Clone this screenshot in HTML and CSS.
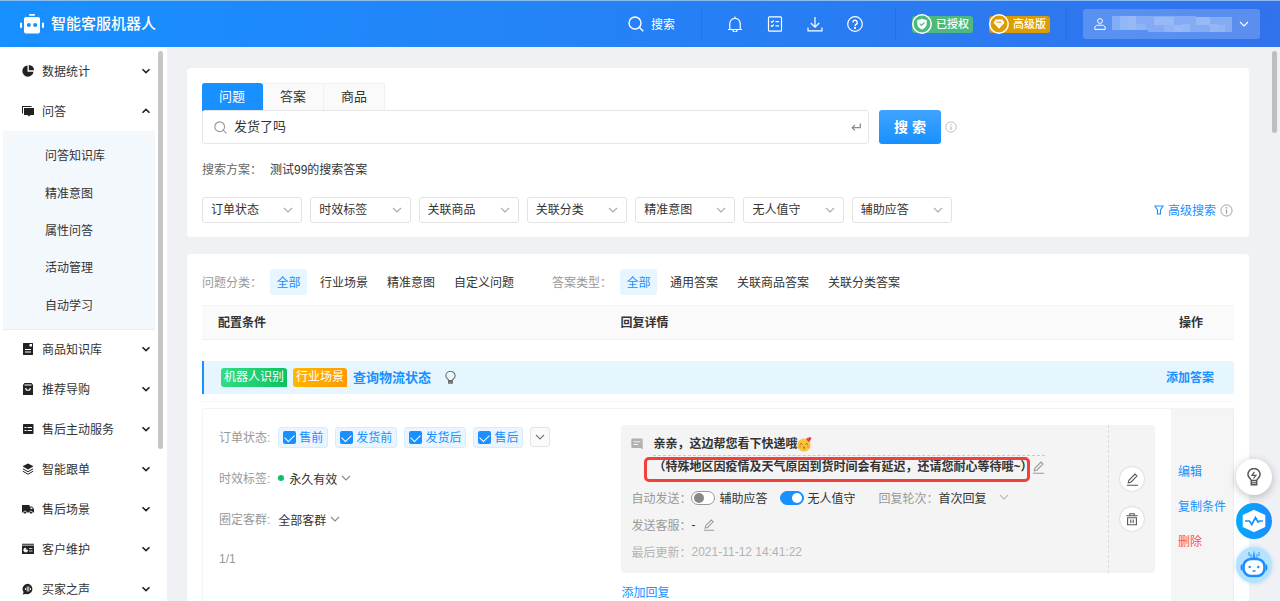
FILE: index.html
```html
<!DOCTYPE html>
<html lang="zh-CN">
<head>
<meta charset="utf-8">
<title>智能客服机器人</title>
<meta name="viewport" content="width=device-width, initial-scale=1">
<link rel="stylesheet" href="styles.css">
</head>
<body>
<svg class="defs" width="0" height="0" aria-hidden="true">
  <symbol id="chev" viewBox="0 0 10 10"><path d="M1 3l4 4 4-4" fill="none" stroke="currentColor" stroke-width="1.1"/></symbol>
  <symbol id="chev-bold" viewBox="0 0 10 10"><path d="M1.500 3.200L5 6.600l3.500-3.400" fill="none" stroke="currentColor" stroke-width="1.600"/></symbol>
  <symbol id="info" viewBox="0 0 14 14"><g fill="none" stroke="currentColor"><circle cx="7" cy="7" r="6"/><path d="M7 6v4.500" stroke-width="1.300"/></g><circle cx="7" cy="4" r=".9" fill="currentColor"/></symbol>
  <symbol id="search" viewBox="0 0 16 16"><g fill="none" stroke="currentColor" stroke-width="1.400"><circle cx="7" cy="7" r="6"/><path d="M11.300 11.300L15.200 15.200"/></g></symbol>
  <symbol id="pencil" viewBox="0 0 14 14"><path d="M2.500 10.500l.6-2.700L9.700 1.200l2.100 2.100-6.600 6.600zM1 13.200h12" fill="none" stroke="currentColor" stroke-width="1.200"/></symbol>
</svg>
<div class="app">
  <header class="topbar">
    <h1 class="brand">
      <svg width="24" height="20" viewBox="0 0 24 20" fill="#fff" aria-hidden="true"><rect x="9" y="0" width="6" height="1.800" rx=".9"/><path d="M6 3h12a2 2 0 0 1 2 2v12.500a2 2 0 0 1-2 2H6a2 2 0 0 1-2-2V5a2 2 0 0 1 2-2z"/><rect x="0" y="8.500" width="2" height="5.500" rx="1"/><rect x="22" y="8.500" width="2" height="5.500" rx="1"/><circle cx="8.800" cy="11" r="2" fill="#1b8cff"/><circle cx="15.200" cy="11" r="2" fill="#1b8cff"/></svg>
      <span>智能客服机器人</span>
    </h1>
    <div class="tools">
      <button class="top-search" type="button"><svg width="16" height="16" aria-hidden="true"><use href="#search"/></svg><span>搜索</span></button>
      <span class="divider"></span>
      <div class="tool-icons">
        <button type="button" aria-label="通知"><svg width="16" height="16" viewBox="0 0 16 16" fill="none" stroke="#fff" stroke-width="1.200"><path d="M1 13.500h14M2.800 13.300V7.500a5.200 5.200 0 0 1 10.400 0v5.800M8 .5v1.800M6 14a2 2 0 0 0 4 0"/></svg></button>
        <button type="button" aria-label="任务"><svg width="16" height="16" viewBox="0 0 16 16" fill="none" stroke="#fff" stroke-width="1.200"><rect x="1.500" y=".8" width="13" height="14.400" rx="1"/><path d="M4 5.300l1 1 1.800-1.900M8.500 5.600H12M4 9.500l1 1 1.800-1.900M8.500 9.800H12"/></svg></button>
        <button type="button" aria-label="下载"><svg width="16" height="16" viewBox="0 0 16 16" fill="none" stroke="#fff" stroke-width="1.200"><path d="M8 1v10M3.800 7L8 11.200 12.200 7M1 11.500v3.300h14v-3.300"/></svg></button>
        <button type="button" aria-label="帮助"><svg width="16" height="16" viewBox="0 0 16 16" fill="none" stroke="#fff" stroke-width="1.200"><circle cx="8" cy="8" r="7.300"/><path d="M5.800 6.400a2.200 2.200 0 1 1 3.300 1.900c-.8.500-1.100.8-1.100 1.600" stroke-width="1.400"/><circle cx="8" cy="11.900" r=".5"/></svg></button>
      </div>
      <span class="divider"></span>
      <span class="badge badge-green"><svg width="20" height="20" viewBox="0 0 20 20"><circle cx="10" cy="10" r="9.200" fill="#4cba7c" stroke="#fff" stroke-width="1.500"/><path d="M10 4.500c1.500 1 3 1.300 4.700 1.400v4c0 2.500-2 4.200-4.700 5.600-2.700-1.400-4.700-3.100-4.700-5.600v-4C7 5.800 8.500 5.500 10 4.500z" fill="#fff"/><path d="M7.700 9.600l1.800 1.800 3-3" fill="none" stroke="#4cba7c" stroke-width="1.200"/></svg><span>已授权</span></span>
      <span class="badge badge-gold"><svg width="20" height="20" viewBox="0 0 20 20"><circle cx="10" cy="10" r="9.200" fill="#dc9c02" stroke="#fff" stroke-width="1.500"/><path d="M6.700 5.500h6.600l2.200 3.300-5.500 6-5.500-6z" fill="#fff"/><path d="M7.500 8.200h5" stroke="#dc9c02"/></svg><span>高级版</span></span>
      <span class="divider"></span>
      <button class="account" type="button" aria-label="账号">
        <svg width="12" height="12" viewBox="0 0 12 12" fill="none" stroke="#fff"><circle cx="6" cy="3" r="2.400"/><path d="M.8 11.400V10c0-1.800 1.200-2.800 3-2.800h4.400c1.800 0 3 1 3 2.800v1.400z"/></svg>
        <svg class="mosaic" width="120" height="16" viewBox="0 0 120 16" fill="#fff"><path d="M0 0h84v1h36v15H36v-2H0z" opacity=".26"/><path d="M8 0h8v14H8zM70 8h8v8h-8zM98 8h8v8h-8z" opacity=".12"/><path d="M16 0h8v14h-8zM42 1h20v8H42zM62 9h8v7h-8zM84 1h14v8H84z" opacity=".16"/><path d="M24 8h10v6H24zM106 9h7v7h-7zM52 9h10v7H52z" opacity=".1"/></svg>
        <svg width="10" height="10"><use href="#chev"/></svg>
      </button>
    </div>
  </header>

  <div class="body">
    <nav class="sidebar" aria-label="主菜单">
      <button class="menu" type="button"><svg width="12" height="12" viewBox="0 0 12 12"><path d="M5.500.5A5.600 5.600 0 1 0 11.500 6.700H5.500z"/><path d="M6.800 0A5.200 5.200 0 0 1 12 5.300H6.800z"/></svg><span>数据统计</span><svg width="10" height="10"><use href="#chev-bold"/></svg></button>
      <button class="menu" type="button" aria-expanded="true"><svg width="12" height="12" viewBox="0 0 12 12"><path d="M0 1h9.500v1H1v6.500H0z"/><path d="M2 3h10v7H8.500L7 11.500 5.500 10H2z"/></svg><span>问答</span><svg class="up" width="10" height="10"><use href="#chev-bold"/></svg></button>
      <div class="submenu">
        <a href="#kb">问答知识库</a>
        <a href="#intent">精准意图</a>
        <a href="#attr">属性问答</a>
        <a href="#event">活动管理</a>
        <a href="#learn">自动学习</a>
      </div>
      <button class="menu" type="button"><svg width="12" height="12" viewBox="0 0 12 12"><path fill-rule="evenodd" d="M1.500 0h9A.5.5 0 0 1 11 .5v11a.5.5 0 0 1-.5.5h-9a.5.5 0 0 1-.5-.5V.5A.5.5 0 0 1 1.500 0zM7.500 1v2.500H10V1zM3 6v1h6V6zm0 2.500v1h6v-1z"/></svg><span>商品知识库</span><svg width="10" height="10"><use href="#chev-bold"/></svg></button>
      <button class="menu" type="button"><svg width="12" height="12" viewBox="0 0 12 12"><path d="M2.500 0h7L11 2v10H1V2z"/><path d="M2.500 2h7M3.700 5a2.300 2.300 0 0 0 4.600 0" fill="none" stroke="#fff" stroke-width="1.100"/></svg><span>推荐导购</span><svg width="10" height="10"><use href="#chev-bold"/></svg></button>
      <button class="menu" type="button"><svg width="12" height="12" viewBox="0 0 12 12"><rect x="1" y="1" width="10.500" height="10" rx=".8"/><path d="M2.500 4.500h2m1 0h4.500M2.500 7.500h2m1 0h4.500" stroke="#fff" stroke-width="1.100"/></svg><span>售后主动服务</span><svg width="10" height="10"><use href="#chev-bold"/></svg></button>
      <button class="menu" type="button"><svg width="12" height="12" viewBox="0 0 12 12"><path d="M6 .5l5.500 2.800L6 6.500.5 3.300z"/><path d="M.8 5.800L6 8.700l5.200-2.900M.8 8.200L6 11.200l5.200-3" fill="none" stroke="#222"/></svg><span>智能跟单</span><svg width="10" height="10"><use href="#chev-bold"/></svg></button>
      <button class="menu" type="button"><svg width="12" height="12" viewBox="0 0 12 12"><path d="M0 2h7.500v1.500H10L12 6v3.500H0z"/><circle cx="3" cy="9.600" r="1.500" stroke="#fff" stroke-width=".7"/><circle cx="9" cy="9.600" r="1.500" stroke="#fff" stroke-width=".7"/><path d="M8.500 4.500h1.200L10.800 6H8.500z" fill="#fff"/></svg><span>售后场景</span><svg width="10" height="10"><use href="#chev-bold"/></svg></button>
      <button class="menu" type="button"><svg width="12" height="12" viewBox="0 0 12 12"><path d="M0 .8h12v1H0zM0 2.500h12V11H0z"/><path d="M3.700 5v2h2a2 2 0 1 1-2-2zM7 5.500h3.500M7 8h3.500" fill="#fff" stroke="#fff" stroke-width=".8"/></svg><span>客户维护</span><svg width="10" height="10"><use href="#chev-bold"/></svg></button>
      <button class="menu" type="button"><svg width="12" height="12" viewBox="0 0 12 12"><path d="M6 .8A5.200 5.200 0 1 1 4 11l-3.200.4.800-2.300A5.200 5.200 0 0 1 6 .8z"/><path d="M3.500 5v2M5.200 3.500v5M6.800 3.500v5M8.500 5v2" stroke="#fff" stroke-width=".9"/></svg><span>买家之声</span><svg width="10" height="10"><use href="#chev-bold"/></svg></button>
      <i class="thumb thumb-side"></i>
    </nav>

    <main class="main">
      <section class="card search-card">
        <div class="tabs" role="tablist">
          <button class="tab on" type="button" role="tab" aria-selected="true">问题</button>
          <button class="tab" type="button" role="tab">答案</button>
          <button class="tab" type="button" role="tab">商品</button>
        </div>
        <form class="search-row">
          <div class="search-box">
            <svg class="grey" width="13" height="13"><use href="#search"/></svg>
            <input type="text" value="发货了吗" aria-label="搜索问题">
            <svg width="10" height="8" viewBox="0 0 10 8" fill="none" stroke="#8c8c8c" stroke-width="1.300"><path d="M9.300.5v4.200H1.300M4 2L1.200 4.700 4 7.400"/></svg>
          </div>
          <button class="search-btn" type="button">搜 索</button>
          <svg class="grey light" width="12" height="12"><use href="#info"/></svg>
        </form>
        <p class="scheme"><span>搜索方案：</span><a href="#scheme">测试99的搜索答案</a></p>
        <div class="filters">
          <div class="selects">
            <label class="sel"><select aria-label="订单状态"><option>订单状态</option></select><svg width="10" height="10"><use href="#chev"/></svg></label>
            <label class="sel"><select aria-label="时效标签"><option>时效标签</option></select><svg width="10" height="10"><use href="#chev"/></svg></label>
            <label class="sel"><select aria-label="关联商品"><option>关联商品</option></select><svg width="10" height="10"><use href="#chev"/></svg></label>
            <label class="sel"><select aria-label="关联分类"><option>关联分类</option></select><svg width="10" height="10"><use href="#chev"/></svg></label>
            <label class="sel"><select aria-label="精准意图"><option>精准意图</option></select><svg width="10" height="10"><use href="#chev"/></svg></label>
            <label class="sel"><select aria-label="无人值守"><option>无人值守</option></select><svg width="10" height="10"><use href="#chev"/></svg></label>
            <label class="sel"><select aria-label="辅助应答"><option>辅助应答</option></select><svg width="10" height="10"><use href="#chev"/></svg></label>
          </div>
          <a class="advanced" href="#advanced"><svg width="10" height="10" viewBox="0 0 10 10" fill="none" stroke="currentColor" stroke-width="1.100"><path d="M1 1h8L6.500 5v4h-3V5z"/></svg><span>高级搜索</span><svg class="grey" width="13" height="13"><use href="#info"/></svg></a>
        </div>
      </section>

      <section class="card list-card">
        <div class="cats">
          <div class="cat-group"><span class="cat-label">问题分类：</span><button class="cat on" type="button">全部</button><button class="cat" type="button">行业场景</button><button class="cat" type="button">精准意图</button><button class="cat" type="button">自定义问题</button></div>
          <div class="cat-group"><span class="cat-label">答案类型：</span><button class="cat on" type="button">全部</button><button class="cat" type="button">通用答案</button><button class="cat" type="button">关联商品答案</button><button class="cat" type="button">关联分类答案</button></div>
        </div>
        <table class="table">
          <colgroup><col class="c1"><col><col class="c3"></colgroup>
          <thead><tr><th>配置条件</th><th>回复详情</th><th class="act">操作</th></tr></thead>
          <tbody>
            <tr><td class="q-cell" colspan="3">
              <div class="question">
                <span class="tag green">机器人识别</span><span class="tag orange">行业场景</span>
                <strong>查询物流状态</strong>
                <svg width="11" height="13" viewBox="0 0 10 12" fill="none" stroke="#666"><path d="M3.300 8.800C3.300 7.500.7 6.800.7 4.600a4.300 4.300 0 0 1 8.600 0c0 2.200-2.600 2.900-2.600 4.200zM3.300 9h3.400v2.300H3.300zM3.500 10h3"/></svg>
                <a class="add-answer" href="#add">添加答案</a>
              </div>
            </td></tr>
            <tr class="gap"><td colspan="3"></td></tr>
            <tr class="answer">
              <td class="cond">
                <div class="row"><span class="lbl">订单状态:</span>
                  <div class="chips">
                    <label class="chip"><input type="checkbox" checked><span>售前</span></label>
                    <label class="chip"><input type="checkbox" checked><span>发货前</span></label>
                    <label class="chip"><input type="checkbox" checked><span>发货后</span></label>
                    <label class="chip"><input type="checkbox" checked><span>售后</span></label>
                    <button class="more" type="button" aria-label="更多"><svg width="10" height="10"><use href="#chev"/></svg></button>
                  </div>
                </div>
                <div class="row"><span class="lbl">时效标签:</span><button class="pick" type="button"><i class="dot"></i>永久有效<svg width="10" height="10"><use href="#chev"/></svg></button></div>
                <div class="row"><span class="lbl">圈定客群:</span><button class="pick" type="button">全部客群<svg width="10" height="10"><use href="#chev"/></svg></button></div>
                <div class="row lbl count">1/1</div>
              </td>
              <td class="reply">
                <div class="panel">
                  <div class="panel-main">
                    <div class="msg">
                      <svg width="12" height="13" viewBox="0 0 12 13" fill="#b0b0b0"><path d="M1.500.5h9a1.200 1.200 0 0 1 1.200 1.200v9.800L9.500 10h-8A1.200 1.200 0 0 1 .3 8.800V1.700A1.200 1.200 0 0 1 1.500.5z"/><path d="M2.500 3.800h7M2.500 6.500h4.500" stroke="#f4f4f4"/></svg>
                      <div class="msg-text">
                        <div class="line first">亲亲，这边帮您看下快递哦<svg width="15" height="15" viewBox="0 0 15 15" role="img" aria-label="笑脸"><circle cx="7" cy="8" r="6.600" fill="#fbc43a"/><ellipse cx="3" cy="9.800" rx="1.700" ry="1.100" fill="#f9a04c"/><ellipse cx="11" cy="9.800" rx="1.700" ry="1.100" fill="#f9a04c"/><path d="M2.800 7.500q1.300-1.800 2.600 0M8.400 7.500q1.300-1.800 2.600 0M6.200 9.700q2 .2.800 1.200 1.300.7-.4 1.300" fill="none" stroke="#7a4a17" stroke-width=".8"/><path d="M12 5.200L9.600 2.800a1.300 1.300 0 0 1 1.900-1.700A1.400 1.400 0 0 1 14.200 2z" fill="#ee3b49"/></svg></div>
                        <div class="line second"><span class="mark">（特殊地区因疫情及天气原因到货时间会有延迟，还请您耐心等待哦~）</span><svg class="grey" width="13" height="13"><use href="#pencil"/></svg></div>
                      </div>
                    </div>
                    <div class="meta auto"><span class="lbl">自动发送：</span>
                      <label class="sw"><input type="checkbox" role="switch">辅助应答</label>
                      <label class="sw"><input type="checkbox" role="switch" checked>无人值守</label>
                      <span class="lbl round">回复轮次：</span><button class="pick turn" type="button">首次回复<svg width="10" height="10"><use href="#chev"/></svg></button>
                    </div>
                    <div class="meta"><span class="lbl">发送客服：</span><span class="dash">-</span><svg class="grey" width="12" height="12"><use href="#pencil"/></svg></div>
                    <div class="meta pale"><span class="lbl">最后更新：</span><time>2021-11-12 14:41:22</time></div>
                  </div>
                  <div class="panel-side">
                    <button type="button" aria-label="编辑"><svg width="13" height="13"><use href="#pencil"/></svg></button>
                    <button type="button" aria-label="删除"><svg width="12" height="13" viewBox="0 0 12 13" fill="none" stroke="currentColor" stroke-width="1.100"><path d="M.3 2.800h11.400M3.800 2.500V.8h4.400v1.700M1.600 4.800h8.800v7H1.600zM4.800 6.500v3.500M7.200 6.500v3.500"/></svg></button>
                  </div>
                </div>
                <a class="add-reply" href="#reply">添加回复</a>
              </td>
              <td class="ops"><div><a href="#edit">编辑</a><a href="#copy">复制条件</a><a class="danger" href="#delete">删除</a></div></td>
            </tr>
          </tbody>
        </table>
      </section>
    </main>
  </div>
  <i class="thumb thumb-main"></i>
  <div class="floats">
    <button class="fl white" type="button" aria-label="提示"><svg width="14" height="18" viewBox="0 0 14 18" fill="none" stroke="#555" stroke-width="1.500"><path d="M4.300 12.500C4.300 10.800.9 9.800.9 6.600a6.100 6.100 0 0 1 12.200 0c0 3.200-3.400 4.200-3.400 5.900zM4.300 13v3.800h5.400V13"/><path d="M7.500 3.800L5 7.300h4L6.500 10.500" stroke-width="1.200"/><path d="M4.300 14.800h5.400" stroke-width="1.200"/></svg></button>
    <button class="fl blue" type="button" aria-label="监控"><svg width="24" height="24" viewBox="0 0 24 24"><path d="M12 1.800l10.300 4.800v10.800L12 22.200 1.700 17.400V6.600z" fill="#fff" stroke="#fff" stroke-width="2" stroke-linejoin="round"/><path d="M3 12h4.500l2.300 3.500 3.700-7 2.500 4.500 1.500-1H21" fill="none" stroke="#1593ff" stroke-width="1.700"/></svg></button>
    <button class="fl sky" type="button" aria-label="机器人助手"><svg width="28" height="30" viewBox="0 0 28 30"><path d="M14 0l1.500 8h-3zM8.500 2h1v4h-1zM18.500 2h1v4h-1zM11.500 4v4h-1V4zM17.500 4v4h-1V4z" fill="#2b95ff"/><rect x="3.500" y="9" width="21" height="17" rx="7.500" fill="#fff" stroke="#1e8cff" stroke-width="2.600"/><path d="M2 14.500q-1.500 3 0 6M26 14.500q1.500 3 0 6" fill="none" stroke="#1e8cff" stroke-width="1.500"/><circle cx="9.700" cy="17" r="1.200" fill="#1e8cff"/><circle cx="18.300" cy="17" r="1.200" fill="#1e8cff"/><path d="M12.500 20.500q1.500 1.300 3 0" stroke="#1e8cff" stroke-width="1.300" fill="none"/></svg></button>
  </div>
</div>
</body>
</html>
```
FILE: styles.css
```css
* { box-sizing: border-box; }
body, h1, p { margin: 0; }
body, button, input, select {
  font-family: "Liberation Sans", "Noto Sans CJK SC", sans-serif;
  font-size: 12px;
  color: #333;
}
button { border: 0; padding: 0; background: none; cursor: pointer; }
a { color: inherit; text-decoration: none; }
svg { display: block; flex: none; }
.defs { position: absolute; }
.grey { color: #999; }
.light { color: #b8b8b8; }

.app { position: relative; display: flex; flex-direction: column; height: 100vh; overflow: hidden; }

/* Top bar */
.topbar {
  display: flex; align-items: center; justify-content: space-between; flex: none;
  height: 47px; padding: 0 20px;
  border-top: 1px solid #8bbcf0;
  background: linear-gradient(100deg, #1890ff, #3272ec);
  color: #fff;
}
.brand { display: flex; align-items: center; gap: 7px; font-size: 15px; font-weight: 500; }
.brand span { padding-bottom: 3px; }
.tools { display: flex; align-items: center; gap: 16px; }
.tools button { color: #fff; }
.top-search { display: flex; align-items: center; gap: 7px; margin-right: 10px; }
.top-search span, .menu span, .advanced span, .chip span { padding-bottom: 2px; }
.divider { width: 1px; height: 32px; background: rgba(20, 80, 200, .25); }
.tool-icons { display: flex; margin: 0 4px 0 -3px; }
.tool-icons button { display: grid; place-items: center; width: 40px; height: 32px; }
.badge { display: flex; align-items: center; gap: 4px; height: 17px; padding-right: 4px; border-radius: 3px; font-size: 11px; font-weight: 500; }
.badge span { padding-bottom: 2px; }
.badge-green { background: #4cba7c; }
.badge-gold { background: #dc9c02; }
.account { display: flex; align-items: center; gap: 6px; width: 177px; height: 30px; padding: 0 11px; border-radius: 3px; background: rgba(255, 255, 255, .2); }
.account svg:last-child { margin-left: auto; }

/* Side menu */
.body { display: flex; flex: 1; min-height: 0; }
.sidebar { position: relative; flex: none; width: 167px; padding-top: 4px; overflow: hidden; background: #fff; }
.menu { display: flex; align-items: center; gap: 8px; width: 100%; height: 40px; padding: 0 16px 0 22px; text-align: left; }
.menu span { flex: 1; }
.menu svg { fill: #222; color: #222; }
.up { transform: scaleY(-1); }
.submenu { display: flex; flex-direction: column; height: 199px; margin: 0 12px -1px 3px; padding: 5px 0 6px; border-bottom: 1px solid #e0f1fc; background: #f3f8fd; }
.submenu a { display: flex; flex: 1; align-items: center; padding-left: 42px; }
.thumb { position: absolute; width: 5px; border-radius: 3px; background: #c6c6c6; }
.thumb-side { top: 4px; right: 4px; height: 398px; }
.thumb-main { top: 51px; right: 3px; height: 82px; background: #bcbec2; }

/* Content */
.main { flex: 1; min-width: 0; overflow: hidden; padding: 21px 31px 0 20px; background: #f0f1f5; }
.card { padding: 15px; border-radius: 4px; background: #fff; }
.search-card { padding-bottom: 14px; margin-bottom: 17px; }
.tabs { display: flex; }
.tab { width: 61px; height: 28px; padding-bottom: 4px; border: 1px solid #f0f0f0; border-left: 0; background: #fafafa; font-size: 13px; }
.tab.on { border-color: #1890ff; border-radius: 3px 3px 0 0; background: #1890ff; color: #fff; }
.search-row { display: flex; align-items: center; margin-top: -1px; }
.search-box { display: flex; align-items: center; gap: 7px; flex: 0 1 667px; height: 34px; padding: 0 7px 0 11px; border: 1px solid #e6e6e6; border-radius: 3px; background: #fff; }
.search-box input { flex: 1; min-width: 0; padding: 0 0 3px; border: 0; outline: 0; background: none; font-size: 13px; }
.search-btn { width: 62px; height: 34px; margin: 0 4px 0 10px; padding-bottom: 2px; border-radius: 3px; background: linear-gradient(#40a3ff, #1890ff); color: #fff; font-size: 14px; font-weight: 700; }
.scheme { display: flex; gap: 8px; margin: 16px 0 17px; line-height: 20px; }
.scheme span { color: #666; }
.filters { display: flex; align-items: center; justify-content: space-between; }
.selects { display: grid; grid-template-columns: repeat(7, 1fr); gap: 8px; width: 750px; }
.sel { display: grid; align-items: center; height: 26px; border: 1px solid #e2e2e2; border-radius: 3px; color: #aaa; }
.sel select { grid-area: 1 / 1; width: 100%; height: 24px; padding: 0 8px; border: 0; background: none; appearance: none; }
.sel svg { grid-area: 1 / 1; justify-self: end; margin-right: 8px; pointer-events: none; }
.advanced { display: flex; align-items: center; gap: 4px; padding-right: 1px; color: #1890ff; }

/* Categories */
.cats { display: flex; gap: 32px; margin-bottom: 10px; }
.cat-group { display: flex; align-items: center; }
.cat-label { width: 68px; padding-bottom: 2px; color: #999; }
.cat { height: 26px; margin-right: 7px; padding: 0 6px 2px; border-radius: 3px; }
.cat:last-child { margin-right: 0; }
.cat.on { width: 37px; background: #e6f6ff; color: #1890ff; }

/* Table */
.table { width: 100%; border-spacing: 0; table-layout: fixed; }
.c1 { width: 39%; }
.c3 { width: 63px; }
.table th { height: 35px; padding: 0 16px 2px; border-top: 1px solid #f5f5f5; border-bottom: 1px solid #f0f0f0; background: #fafafa; text-align: left; font-weight: 700; }
.table th.act { padding: 0 8px 2px; }
.table td { padding: 0; vertical-align: top; }
.table td.q-cell { padding: 21px 0 7px; border-bottom: 1px solid #f5f5f5; }
.question { display: flex; align-items: center; gap: 6px; height: 33px; padding: 0 20px 0 17px; border-left: 2px solid #1890ff; border-radius: 0 3px 3px 0; background: #e6f6ff; }
.question strong { margin-right: 8px; padding-bottom: 2px; color: #1890ff; font-size: 13px; }
.tag { height: 19px; padding: 0 3px; border-radius: 3px 3px 0 3px; color: #fff; line-height: 19px; }
.tag.green { background: linear-gradient(100deg, #35dd83, #0cc160); }
.tag.orange { background: linear-gradient(100deg, #ffb800, #ff9900); }
.add-answer { margin-left: auto; padding-bottom: 2px; color: #1890ff; font-weight: 700; }
.table .gap td { height: 6px; }

.table td.cond { padding: 18px 0 0 16px; border: solid #f3f3f3; border-width: 1px 0 0 1px; border-radius: 3px 0 0 0; }
.row { display: flex; align-items: center; gap: 8px; height: 21px; margin-bottom: 20px; }
.lbl { color: #999; padding-bottom: 2px; }
.count { padding-bottom: 4px; }
.chips { display: flex; gap: 7px; }
.chip { display: flex; align-items: center; gap: 3px; height: 21px; padding: 0 4px; border: 1px solid #d6ecff; border-radius: 3px; background: #eaf5ff; color: #1890ff; }
.chip input { display: grid; place-items: center; width: 13px; height: 13px; margin: 0; border-radius: 2px; background: #1890ff; appearance: none; }
.chip input::after { content: ""; width: 8px; height: 5px; margin-bottom: 2px; border: solid #fff; border-width: 0 0 1px 1px; transform: rotate(-45deg); }
.more { display: grid; place-items: center; width: 20px; height: 20px; border: 1px solid #e2e2e2; border-radius: 3px; background: #fafafa; color: #777; }
.pick { display: flex; align-items: center; gap: 4px; padding-bottom: 1px; }
.pick svg { color: #888; }
.dot { width: 6px; height: 6px; margin-right: 1px; border-radius: 50%; background: #0cc160; }

.table td.reply { padding: 16px 16px 0 17px; border-top: 1px solid #f3f3f3; }
.panel { display: flex; height: 148px; border-radius: 4px; background: #f4f4f4; }
.panel-main { flex: 1; min-width: 0; padding: 8px 0 0 10px; }
.msg { display: flex; align-items: flex-start; gap: 10px; margin-bottom: 6px; }
.msg > svg { margin-top: 5px; }
.msg-text { font-weight: 700; }
.line { display: flex; align-items: center; line-height: 22px; white-space: nowrap; }
.first { border-bottom: 1px dashed #c8c8c8; }
.second { height: 22px; }
.mark { position: relative; }
.mark::after { content: ""; position: absolute; inset: 1px 2px -4px -9px; border: 3px solid #f0413d; border-radius: 5px; }
.meta { display: flex; align-items: center; height: 27px; white-space: nowrap; }
.sw { display: flex; align-items: center; gap: 4px; margin-right: 12px; }
.sw input { position: relative; width: 24px; height: 14px; margin: 0; border: 1px solid #999; border-radius: 7px; background: #fff; appearance: none; }
.sw input::after { content: ""; position: absolute; top: 1px; left: 2px; width: 10px; height: 10px; border-radius: 50%; background: #888; }
.sw input:checked { border-color: #1890ff; background: #1890ff; }
.sw input:checked::after { left: 11px; background: #fff; }
.auto .lbl, .meta .lbl { padding-bottom: 0; }
.round { margin-left: 11px; }
.turn { gap: 12px; }
.turn svg { color: #bbb; }
.dash { width: 12px; }
.pale, .pale .lbl { color: #b3b3b3; }
.panel-side { display: flex; flex-direction: column; align-items: center; justify-content: center; gap: 16px; width: 47px; border-left: 1px dashed #dcdcdc; }
.panel-side button { display: grid; place-items: center; width: 24px; height: 24px; border-radius: 50%; background: #fff; box-shadow: 0 0 2px rgba(0, 0, 0, .25); color: #555; }
.add-reply { display: inline-block; margin-top: 11px; color: #1890ff; line-height: 18px; }

.table td.ops { padding: 53px 0 40px 7px; border-top: 1px solid #f3f3f3; border-right: 1px solid #eee; background: #f5f5f5; }
.ops div { display: flex; flex-direction: column; gap: 15px; color: #1890ff; line-height: 20px; white-space: nowrap; }
.ops .danger { color: #ff4d5e; }

/* Floating buttons */
.floats { position: absolute; top: 459px; right: 8px; display: flex; flex-direction: column; gap: 8px; }
.fl { display: grid; place-items: center; width: 36px; height: 36px; border-radius: 50%; }
.white { background: #fff; box-shadow: 0 2px 8px rgba(0, 0, 0, .25); }
.blue { background: linear-gradient(90deg, #06a9fb, #1b8cff); }
.sky { background: #b5e3ff; box-shadow: 0 0 4px rgba(60, 160, 255, .3); }
```
